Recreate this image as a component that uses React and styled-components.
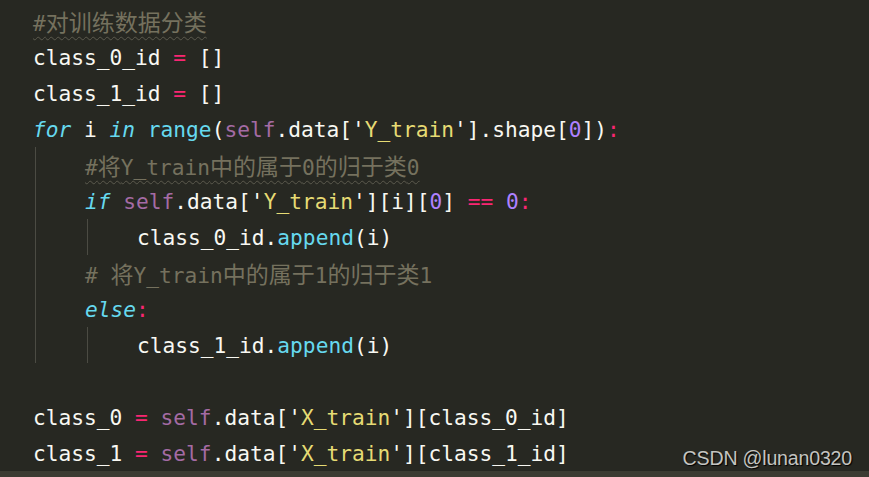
import React from "react";
import styled, { createGlobalStyle } from "styled-components";

const GlobalStyle = createGlobalStyle`
  html, body {
    margin: 0;
    padding: 0;
    background: #272822;
  }
`;

const Page = styled.div`
  position: relative;
  width: 869px;
  height: 477px;
  display: flex;
  flex-direction: column;
  background: #272822;
  overflow: hidden;
`;

const Editor = styled.div`
  flex: 1;
  padding: 3px 0 0 33px;
  font-family: "DejaVu Sans Mono", "Liberation Mono", "Noto Sans CJK SC", monospace;
  font-size: 21.2px;
  color: #f8f8f2;
`;

const Line = styled.div`
  display: flex;
  align-items: center;
  height: 36px;
  white-space: pre;
`;

const Indent = styled.span`
  align-self: stretch;
  width: calc(4ch - 2px);
  margin-left: 2px;
  border-left: 1px solid ${p => (p.$guide ? "#4b4b43" : "transparent")};
  flex-shrink: 0;
`;

const Code = styled.span`
  display: inline-block;
`;

const colors = {
  kw: "#66d9ef",
  fn: "#66d9ef",
  self: "#a46ba4",
  op: "#f92672",
  num: "#ae81ff",
  str: "#e6db74",
  cm: "#75715e",
  tx: "#f8f8f2",
};

const Tok = styled.span`
  color: ${p => colors[p.$k]};
  font-style: ${p => (p.$k === "kw" ? "italic" : "normal")};
`;

const Comment = styled.span`
  color: #75715e;
  text-decoration: ${p => (p.$squiggle ? "underline wavy #5b594d" : "none")};
  text-decoration-thickness: 1px;
  text-underline-offset: 5px;
`;

const Han = styled.span`
  font-family: "Noto Sans CJK SC", sans-serif;
  font-size: 23px;
`;

const Footer = styled.div`
  height: 9px;
  background: #3c3c33;
`;

const Watermark = styled.div`
  position: absolute;
  right: 17px;
  bottom: 7px;
  font-family: "Liberation Sans", Arial, sans-serif;
  font-size: 19.6px;
  color: #c4c4c0;
  text-shadow: 1px 1px 1px #000;
  letter-spacing: -0.2px;
`;

const splitHan = text =>
  text.split(/([\u4e00-\u9fff]+)/).map((part, i) =>
    /[\u4e00-\u9fff]/.test(part) ? <Han key={i}>{part}</Han> : part
  );

// [indent guides, tokens]; a token is [kind, text] or ["cm", text, squiggle]
const lines = [
  [[], [["cm", "#对训练数据分类", true]]],
  [[], [["tx", "class_0_id "], ["op", "="], ["tx", " []"]]],
  [[], [["tx", "class_1_id "], ["op", "="], ["tx", " []"]]],
  [[], [["kw", "for"], ["tx", " i "], ["kw", "in"], ["tx", " "], ["fn", "range"], ["tx", "("], ["self", "self"], ["tx", ".data['"], ["str", "Y_train"], ["tx", "'].shape["], ["num", "0"], ["tx", "])"], ["op", ":"]]],
  [[true], [["cm", "#将Y_train中的属于0的归于类0", true]]],
  [[true], [["kw", "if"], ["tx", " "], ["self", "self"], ["tx", ".data['"], ["str", "Y_train"], ["tx", "'][i]["], ["num", "0"], ["tx", "] "], ["op", "=="], ["tx", " "], ["num", "0"], ["op", ":"]]],
  [[true, true], [["tx", "class_0_id."], ["fn", "append"], ["tx", "(i)"]]],
  [[true], [["cm", "# 将Y_train中的属于1的归于类1"]]],
  [[true], [["kw", "else"], ["op", ":"]]],
  [[true, true], [["tx", "class_1_id."], ["fn", "append"], ["tx", "(i)"]]],
  [[], []],
  [[], [["tx", "class_0 "], ["op", "="], ["tx", " "], ["self", "self"], ["tx", ".data['"], ["str", "X_train"], ["tx", "'][class_0_id]"]]],
  [[], [["tx", "class_1 "], ["op", "="], ["tx", " "], ["self", "self"], ["tx", ".data['"], ["str", "X_train"], ["tx", "'][class_1_id]"]]],
];

const renderTok = ([kind, text, squiggle], i) => {
  if (kind === "cm") {
    return (
      <Comment key={i} $squiggle={squiggle}>
        {splitHan(text)}
      </Comment>
    );
  }
  return (
    <Tok key={i} $k={kind}>
      {text}
    </Tok>
  );
};

export default function App() {
  return (
    <Page>
      <GlobalStyle />
      <Editor>
        {lines.map(([guides, toks], n) => (
          <Line key={n}>
            {guides.map((g, j) => (
              <Indent key={j} $guide={g} />
            ))}
            <Code>{toks.map(renderTok)}</Code>
          </Line>
        ))}
      </Editor>
      <Footer />
      <Watermark>CSDN @lunan0320</Watermark>
    </Page>
  );
}
